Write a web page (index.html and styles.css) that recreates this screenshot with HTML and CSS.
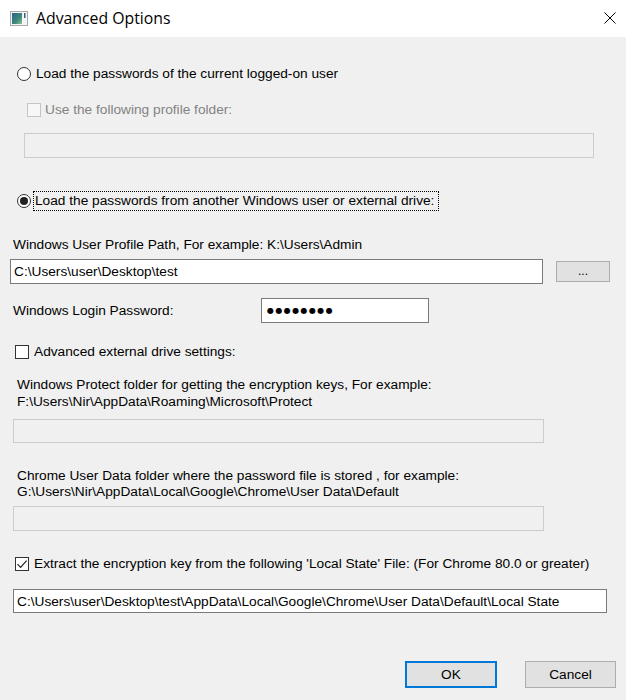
FILE: index.html
```html
<!DOCTYPE html>
<html>
<head>
<meta charset="utf-8">
<title>Advanced Options</title>
<link rel="stylesheet" href="styles.css">
</head>
<body>
<div class="titlebar">
  <svg class="appicon" viewBox="0 0 18 15" width="18" height="15">
    <defs>
      <linearGradient id="g" x1="0" y1="0" x2="1" y2="1">
        <stop offset="0" stop-color="#2e5f8f"/>
        <stop offset="0.6" stop-color="#3d8a7a"/>
        <stop offset="1" stop-color="#8fc29a"/>
      </linearGradient>
    </defs>
    <rect x="0.5" y="0.5" width="17" height="14" fill="#f4f4f4" stroke="#a9a9a9"/>
    <rect x="2" y="2" width="10" height="11" fill="url(#g)"/>
    <rect x="14" y="2" width="1.5" height="5" fill="#3a5f8a"/>
  </svg>
  <span class="title">Advanced Options</span>
  <svg class="close" viewBox="0 0 12 12" width="12" height="12">
    <path d="M0.5 0.5 L11.5 11.5 M11.5 0.5 L0.5 11.5" stroke="#000" stroke-width="1" fill="none"/>
  </svg>
</div>
<div class="content">
  <div class="row r-radio1"><span class="radio"></span><span class="lbl">Load the passwords of the current logged-on user</span></div>
  <div class="row r-usefolder"><span class="check disabled"></span><span class="lbl dimmed">Use the following profile folder:</span></div>
  <div class="field off f-profile"></div>
  <div class="row r-radio2"><span class="radio on"></span><span class="lbl focus">Load the passwords from another Windows user or external drive:</span></div>
  <div class="text t-path">Windows User Profile Path, For example: K:\Users\Admin</div>
  <div class="path-row">
    <div class="field f-path">C:\Users\user\Desktop\test</div>
    <div class="btn browse">...</div>
  </div>
  <div class="pw-row">
    <span class="text t-pw">Windows Login Password:</span>
    <div class="field f-pw"><span class="dots">●●●●●●●●</span></div>
  </div>
  <div class="row r-adv"><span class="check"></span><span class="lbl">Advanced external drive settings:</span></div>
  <div class="text t-protect">Windows Protect folder for getting the encryption keys, For example:<br>F:\Users\Nir\AppData\Roaming\Microsoft\Protect</div>
  <div class="field off f-protect"></div>
  <div class="text t-chrome">Chrome User Data folder where the password file is stored , for example:<br>G:\Users\Nir\AppData\Local\Google\Chrome\User Data\Default</div>
  <div class="field off f-chrome"></div>
  <div class="row r-extract"><span class="check on"><svg viewBox="0 0 12 12" width="12" height="12"><path d="M1.5 6.2 L4.6 9.3 L10.6 2.6" stroke="#222" stroke-width="1.2" fill="none"/></svg></span><span class="lbl">Extract the encryption key from the following 'Local State' File: (For Chrome 80.0 or greater)</span></div>
  <div class="field f-local">C:\Users\user\Desktop\test\AppData\Local\Google\Chrome\User Data\Default\Local State</div>
  <div class="buttons">
    <div class="btn ok">OK</div>
    <div class="btn cancel">Cancel</div>
  </div>
</div>
</body>
</html>
```

FILE: styles.css
```css
* { box-sizing: border-box; }
html, body { margin: 0; padding: 0; }
body {
  width: 626px;
  height: 700px;
  overflow: hidden;
  background: #f0f0f0;
  font-family: "Liberation Sans", Arial, sans-serif;
  font-size: 13.7px;
  color: #000;
}
.titlebar {
  height: 37px;
  background: #fff;
  display: flex;
  align-items: center;
  padding-left: 10px;
  padding-bottom: 1px;
}
.appicon { margin-right: 8px; margin-top: 1px; }
.title {
  flex: 1;
  font-family: "Open Sans", "Noto Sans", sans-serif;
  font-size: 15.8px;
  color: #000;
}
.close { margin-right: 10px; }

.content {
  display: flex;
  flex-direction: column;
  align-items: flex-start;
}
.row {
  display: flex;
  align-items: center;
  height: 16px;
  white-space: nowrap;
}
.lbl { line-height: 16px; }
.dimmed { color: #838383; }

.radio {
  width: 14px;
  height: 14px;
  border: 1px solid #333;
  border-radius: 50%;
  background: #fff;
  margin-right: 5px;
  display: flex;
  align-items: center;
  justify-content: center;
}
.radio.on::after {
  content: "";
  width: 8px;
  height: 8px;
  border-radius: 50%;
  background: #222;
}
.check {
  width: 14px;
  height: 14px;
  border: 1px solid #333;
  background: #fff;
  margin-right: 5px;
  display: flex;
  align-items: center;
  justify-content: center;
}
.check.disabled { border-color: #c4c4c4; background: #f7f7f7; }

.r-radio1 { margin: 29px 0 0 17px; }
.r-usefolder { margin: 20px 0 0 27px; }
.r-usefolder .check { margin-right: 4px; }

.field {
  height: 25px;
  border: 1px solid #7a7a7a;
  background: #fff;
  padding: 0 3px;
  display: flex;
  align-items: center;
  white-space: nowrap;
}
.field.off { border-color: #cccccc; background: #f0f0f0; }
.f-profile { margin: 15px 0 0 24px; width: 570px; }

.r-radio2 { margin: 33px 0 0 17px; height: 20px; }
.r-radio2 .radio { margin-right: 2px; }
.focus {
  border: 1px dotted #000;
  padding: 1px 4px 2px 1px;
  line-height: 15px;
}

.text { line-height: 16px; white-space: nowrap; }
.t-path { margin: 26px 0 0 13px; }
.path-row {
  margin: 6px 0 0 10px;
  display: flex;
  align-items: center;
}
.f-path { width: 533px; }
.btn {
  background: #e1e1e1;
  border: 1px solid #adadad;
  display: flex;
  align-items: center;
  justify-content: center;
}
.browse {
  width: 54px;
  height: 21px;
  margin-left: 13px;
  font-size: 12px;
  line-height: 12px;
  padding-bottom: 2px;
}
.pw-row {
  margin: 14px 0 0 13px;
  display: flex;
  align-items: center;
}
.t-pw { width: 248px; }
.f-pw { width: 168px; padding-left: 5px; }
.dots {
  font-family: "DejaVu Sans", sans-serif;
  font-size: 8px;
  letter-spacing: 1.4px;
}

.r-adv { margin: 21px 0 0 15px; }
.t-protect { margin: 16px 0 0 17px; line-height: 17px; }
.f-protect { margin: 9px 0 0 13px; width: 531px; height: 24px; }
.t-chrome { margin: 25px 0 0 17px; }
.f-chrome { margin: 6px 0 0 13px; width: 531px; }
.r-extract { margin: 25px 0 0 15px; }
.f-local { margin: 17px 0 0 13px; width: 594px; height: 24px; }

.buttons {
  margin: 48px 0 0 405px;
  display: flex;
  gap: 28px;
}
.ok, .cancel { height: 27px; }
.ok { width: 92px; border: 2px solid #0078d7; }
.cancel { width: 91px; }
```
